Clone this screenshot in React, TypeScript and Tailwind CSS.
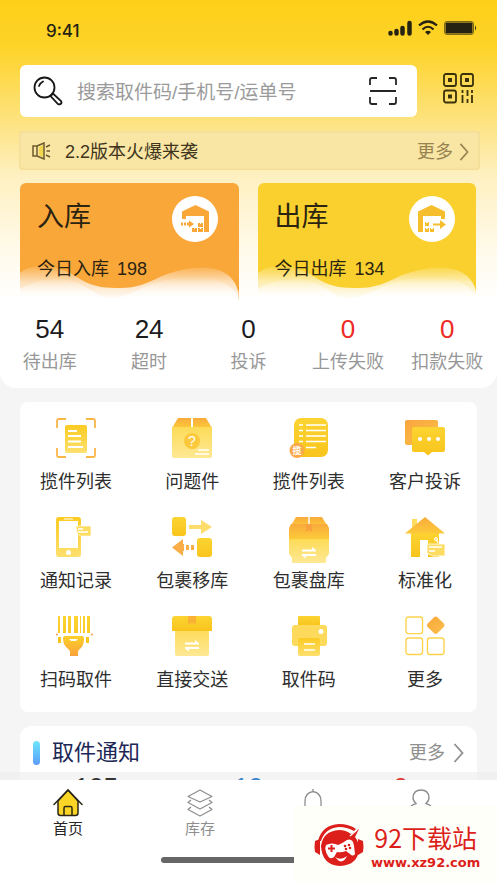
import type { ReactNode } from 'react';

const Chevron = ({ className }: { className: string }) => (
  <svg viewBox="0 0 10 20" className={className} fill="none" stroke="currentColor" strokeWidth="1.8">
    <path d="M1 1l8 9-8 9" />
  </svg>
);

const Gradients = () => (
  <svg width="0" height="0" className="absolute" aria-hidden="true">
    <defs>
      <linearGradient id="gold" x1="0" y1="0" x2="0" y2="1">
        <stop offset="0" stopColor="#fbcb22" />
        <stop offset="1" stopColor="#fde06e" />
      </linearGradient>
      <linearGradient id="pale" x1="0" y1="0" x2="0" y2="1">
        <stop offset="0" stopColor="#fddb58" />
        <stop offset="1" stopColor="#fee894" />
      </linearGradient>
      <linearGradient id="deep" x1="0" y1="0" x2="0" y2="1">
        <stop offset="0" stopColor="#fcd432" />
        <stop offset="1" stopColor="#f8c41c" />
      </linearGradient>
      <linearGradient id="amber" x1="0" y1="0" x2="1" y2="1">
        <stop offset="0" stopColor="#f9a63c" />
        <stop offset="1" stopColor="#fbc04a" />
      </linearGradient>
      <linearGradient id="sunset" x1="0" y1="0" x2="0" y2="1">
        <stop offset="0" stopColor="#fcd028" />
        <stop offset="1" stopColor="#f9a23c" />
      </linearGradient>
      <linearGradient id="roof" x1="0" y1="0" x2="0" y2="1">
        <stop offset="0" stopColor="#f9ab3c" />
        <stop offset="1" stopColor="#fcca38" />
      </linearGradient>
      <linearGradient id="haze" gradientUnits="userSpaceOnUse" x1="0" y1="82" x2="0" y2="117">
        <stop offset="0" stopColor="#fff" stopOpacity="0.05" />
        <stop offset="0.5" stopColor="#fff" stopOpacity="0.65" />
        <stop offset="1" stopColor="#fff" />
      </linearGradient>
      <linearGradient id="mist" gradientUnits="userSpaceOnUse" x1="0" y1="94" x2="0" y2="117">
        <stop offset="0" stopColor="#fff" stopOpacity="0" />
        <stop offset="0.5" stopColor="#fff" stopOpacity="0.5" />
        <stop offset="1" stopColor="#fff" />
      </linearGradient>
    </defs>
  </svg>
);

const ScanListIcon = () => (
  <svg viewBox="0 0 40 40" className="h-10 w-10" fill="none">
    <path d="M1 10V3q0-2 2-2h7M30 1h7q2 0 2 2v7M39 30v7q0 2-2 2h-7M10 39H3q-2 0-2-2v-7" stroke="#fbb649" strokeWidth="1.8" />
    <rect x="9" y="7" width="22" height="28" rx="2" fill="url(#gold)" />
    <path d="M12 13h9M12 18h13M12 23.500h13M12 29h15" stroke="#fff" strokeWidth="1.8" />
  </svg>
);

const QuestionBoxIcon = () => (
  <svg viewBox="0 0 40 40" className="h-10 w-10">
    <path d="M6 0h13v10H0z" fill="url(#roof)" />
    <path d="M21 0h13l6 10H21z" fill="url(#roof)" />
    <path d="M0 9h40v29q0 2-2 2H2q-2 0-2-2z" fill="url(#pale)" />
    <circle cx="20" cy="23" r="8" fill="#fbc93b" />
    <text x="20" y="28" textAnchor="middle" fontSize="14" fill="#fff" fontFamily="Liberation Sans, sans-serif">?</text>
    <path d="M26 32h11M23 36h14" stroke="#fff" strokeWidth="1.300" />
  </svg>
);

const CollectListIcon = () => (
  <svg viewBox="0 0 40 40" className="h-10 w-10">
    <rect x="5" y="0" width="34" height="39" rx="7" fill="url(#deep)" />
    <path d="M10 7h4M10 12.500h4M10 18h4M10 23.500h4M17 7h20M17 12.500h20M17 18h20M17 23.500h20M17 29.500h10" stroke="#fff" strokeWidth="1.600" />
    <circle cx="8" cy="32.500" r="7.500" fill="#f9a94a" />
    <text x="8" y="36" textAnchor="middle" fontSize="9" fontWeight="700" fill="#fff" fontFamily="Noto Sans CJK SC, sans-serif">揽</text>
  </svg>
);

const ChatIcon = () => (
  <svg viewBox="0 0 40 40" className="h-10 w-10">
    <rect x="0" y="2" width="33" height="25" rx="2" fill="url(#amber)" />
    <path d="M9 9h29q2 0 2 2v21q0 2-2 2H27l-4 3.500L19 34H9q-2 0-2-2V11q0-2 2-2z" fill="url(#deep)" />
    <circle cx="15" cy="21" r="2" fill="#fff" />
    <circle cx="24" cy="21" r="2" fill="#fff" />
    <circle cx="33" cy="21" r="2" fill="#fff" />
  </svg>
);

const PhoneIcon = () => (
  <svg viewBox="0 0 40 40" className="h-10 w-10">
    <path d="M3 0h19q3 0 3 3v34q0 3-3 3H3q-3 0-3-3V3q0-3 3-3zm0 4v27h19V4z" fill="url(#gold)" fillRule="evenodd" />
    <path d="M8 2h9" stroke="#fff" strokeWidth="1" />
    <circle cx="12.500" cy="35.500" r="2.500" fill="#fff" />
    <path d="M20 9h14q1 0 1 1v8q0 1-1 1H24l-3-3z" fill="#fddc62" stroke="#fff" strokeWidth="0.600" />
    <path d="M22 12h5M22 15h10" stroke="#fff" strokeWidth="1.300" />
  </svg>
);

const MoveIcon = () => (
  <svg viewBox="0 0 40 40" className="h-10 w-10">
    <rect x="0" y="0" width="14" height="19" rx="3" fill="url(#deep)" />
    <path d="M17 8h12V3l11 7-11 7v-5H17z" fill="#fddc6c" />
    <path d="M0 30.500L11 22v5h1v7h-1v5zM14 28h3v5h-3zM19 28h3v5h-3z" fill="#faae48" />
    <rect x="25" y="21" width="15" height="19" rx="3" fill="url(#deep)" />
  </svg>
);

const StockBoxIcon = () => (
  <svg viewBox="0 0 40 46" className="-mb-1.5 h-[46px] w-10">
    <path d="M7 0h26l6 10H1z" fill="url(#roof)" />
    <path d="M0 22h40v15l-3 4v4q0 1-1 1H4q-1 0-1-1v-4l-3-4z" fill="url(#pale)" />
    <path d="M2 7h36l2 4v11H0V11z" fill="url(#roof)" />
    <path d="M17 7h6v8l-3-2-3 2z" fill="#f8a13d" />
    <path d="M20 0v7" stroke="#fff" strokeWidth="1.400" />
    <path d="M13 34.500h14V33l-4-3v2.500H13zM27 37H13v1.500l4 3V39h10z" fill="#fff" />
  </svg>
);

const HouseIcon = () => (
  <svg viewBox="0 0 40 40" className="h-10 w-10">
    <path d="M7 2h5v10H7z" fill="#fddc62" />
    <path d="M6 15h28v25H23V23h-8v17H6z" fill="url(#deep)" />
    <path d="M20 0l20 16.500H0z" fill="url(#roof)" />
    <path d="M22 27h17q1 0 1 1v10q0 1-1 1H28l-4-2h-2z" fill="#fddc62" stroke="#fff" strokeWidth="0.800" />
    <path d="M24 30h13M24 34h6M33 26l-2-4" stroke="#fff" strokeWidth="1.300" />
    <circle cx="31" cy="22" r="1.500" fill="none" stroke="#fff" />
  </svg>
);

const ScannerIcon = () => (
  <svg viewBox="0 0 40 40" className="h-10 w-10">
    <path d="M2 0h2v17H2zM7 0h3v17H7zM12 0h3v17h-3zM18 0h4v17h-4zM24 0h1v17h-1zM27 0h2v17h-2zM31 0h3v17h-3zM2 21h3v6H2zM30 21h3v6h-3z" fill="url(#deep)" />
    <circle cx="1" cy="18.500" r="1" fill="#f79d4a" />
    <circle cx="36" cy="18.500" r="1" fill="#f79d4a" />
    <path d="M9 20h17q2 0 2 3 0 6-3 9-3 2-3 4v4h-8v-4q0-2-3-4-4-4-4-9 0-3 2-3z" fill="url(#sunset)" />
    <path d="M13 23h9l-2 2h-5z" fill="#fff" />
  </svg>
);

const DeliverBoxIcon = () => (
  <svg viewBox="0 0 40 40" className="h-10 w-10">
    <path d="M3 13h34v25q0 2-2 2H5q-2 0-2-2z" fill="url(#pale)" />
    <path d="M3 0h34q3 0 3 3v12H0V3q0-3 3-3z" fill="url(#deep)" />
    <path d="M16 0h8v8l-4-1-4 1z" fill="#f9b136" />
    <path d="M13 28.500h14V27l-4-3v2.500H13zM27 31H13v1.500l4 3V33h10z" fill="#fff" />
  </svg>
);

const PrinterIcon = () => (
  <svg viewBox="0 0 40 40" className="h-10 w-10">
    <path d="M10 0h20q1 0 1 1v9H9V1q0-1 1-1z" fill="url(#deep)" />
    <rect x="3" y="9" width="35" height="21" rx="3" fill="#fdda5c" />
    <rect x="9" y="22" width="22" height="18" rx="2" fill="url(#gold)" />
    <circle cx="32" cy="15.500" r="2.500" fill="#fff" />
    <path d="M15 28h11M15 34h11" stroke="#fff" strokeWidth="1.400" />
  </svg>
);

const MoreIcon = () => (
  <svg viewBox="0 0 41 41" className="h-10 w-10" fill="none">
    <g stroke="#fdd34c" strokeWidth="1.400">
      <rect x="1" y="1" width="17" height="17" rx="2.500" />
      <rect x="1" y="22.500" width="17" height="17" rx="2.500" />
      <rect x="23" y="22.500" width="17" height="17" rx="2.500" />
    </g>
    <path d="M30 1q1.500-1 3 0l7 7q1 1.500 0 3l-7 7q-1.500 1-3 0l-7-7q-1-1.500 0-3z" fill="url(#amber)" />
  </svg>
);

const actions = [
  { label: '揽件列表', icon: <ScanListIcon /> },
  { label: '问题件', icon: <QuestionBoxIcon /> },
  { label: '揽件列表', icon: <CollectListIcon /> },
  { label: '客户投诉', icon: <ChatIcon /> },
  { label: '通知记录', icon: <PhoneIcon /> },
  { label: '包裹移库', icon: <MoveIcon /> },
  { label: '包裹盘库', icon: <StockBoxIcon /> },
  { label: '标准化', icon: <HouseIcon /> },
  { label: '扫码取件', icon: <ScannerIcon /> },
  { label: '直接交送', icon: <DeliverBoxIcon /> },
  { label: '取件码', icon: <PrinterIcon /> },
  { label: '更多', icon: <MoreIcon /> },
];

const stats = [
  { value: 54, label: '待出库', color: 'text-[#1c1c1e]' },
  { value: 24, label: '超时', color: 'text-[#1c1c1e]' },
  { value: 0, label: '投诉', color: 'text-[#1c1c1e]' },
  { value: 0, label: '上传失败', color: 'text-[#ee2a24]' },
  { value: 0, label: '扣款失败', color: 'text-[#ee2a24]' },
];

const StatusBar = () => (
  <div className="flex h-[65px] items-start justify-between pt-5 pr-5 pl-[46px] text-[#262312]">
    <span className="font-['Inter',sans-serif] text-[17px] leading-[22px] font-medium">9:41</span>
    <div className="flex items-center gap-1.5">
      <svg viewBox="0 0 24 16" className="h-4 w-6" stroke="currentColor" strokeWidth="4.500" strokeLinecap="round">
        <path d="M2.500 13v0.500M8.500 11v2.500M14.500 8v5.500M21.500 3v10.500" />
      </svg>
      <svg viewBox="0 0 20 16" className="h-4 w-5" fill="none" stroke="currentColor" strokeWidth="2.200">
        <path d="M1 5.500Q10-2.500 19 5.500M4.500 9.500Q10 4 15.500 9.500" />
        <path d="M7 12q3-2.500 6 0l-3 3z" fill="currentColor" stroke="none" />
      </svg>
      <svg viewBox="0 0 33 14" className="h-3.5 w-[33px]">
        <rect x="0.500" y="0.500" width="29" height="13" rx="2.500" fill="none" stroke="currentColor" strokeOpacity="0.600" />
        <rect x="1.500" y="1.500" width="27" height="11" rx="1" fill="currentColor" />
        <path d="M31 4.500q2 2.500 0 5z" fill="currentColor" />
      </svg>
    </div>
  </div>
);

const SearchRow = () => (
  <div className="flex items-center gap-[26px] pr-[23px] pl-5">
    <form className="flex h-[52px] min-w-0 flex-1 items-center rounded-md bg-white pr-5 pl-[13px]">
      <svg viewBox="0 0 30 30" className="h-[30px] w-[30px] shrink-0" fill="none" stroke="#17171a" strokeWidth="1.800">
        <circle cx="11.500" cy="11.500" r="10" />
        <path d="M6 10q1-3 4-4.500M18.500 19l1.500-1.500 8 7.500q1 1.500 0 2.500-1.500 1.500-3 .5l-7.500-8z" strokeLinecap="round" />
      </svg>
      <label htmlFor="search" className="sr-only">搜索</label>
      <input
        id="search"
        type="text"
        placeholder="搜索取件码/手机号/运单号"
        className="ml-3.5 h-9 min-w-0 flex-1 bg-transparent pt-1 text-[19px] text-[#333] outline-none placeholder:text-[#9a9a9a]"
      />
      <button type="button" aria-label="扫一扫">
        <svg viewBox="0 0 28 28" className="h-7 w-7" fill="none" stroke="#262626" strokeWidth="1.800">
          <path d="M1 8V3q0-2 2-2h5M20 1h5q2 0 2 2v5M27 20v5q0 2-2 2h-5M8 27H3q-2 0-2-2v-5M1 14h26" />
        </svg>
      </button>
    </form>
    <button type="button" aria-label="二维码" className="-mt-1.5">
      <svg viewBox="0 0 31 31" className="h-[31px] w-[31px]" fill="none" stroke="#3a300c" strokeWidth="1.800">
        <rect x="1" y="1" width="12" height="12" rx="2" />
        <rect x="18" y="1" width="12" height="12" rx="2" />
        <rect x="1" y="17.500" width="12" height="12" rx="2" />
        <path d="M5 5h4v4H5zM22 5h4v4h-4zM5 21.500h4v4H5z" fill="#3a300c" stroke="none" />
        <path d="M19.500 17v3M19.500 22v8M24.500 17v6M24.500 26v4M29 17v3M29 22v8" />
      </svg>
    </button>
  </div>
);

const Notice = () => (
  <div className="mt-3.5 mr-[17px] ml-[19px] flex h-[39px] items-center rounded-sm bg-[#fae6a4] pr-[11px] pl-[13px] shadow-[inset_0_0_3px_#e6cf85]">
    <svg viewBox="0 0 20 18" className="h-[18px] w-5" fill="none" stroke="#6b5a2c" strokeWidth="1.500">
      <path d="M1 4h4v10H1zM5 4l7-3v16l-7-3z" />
      <path d="M7 5l4-2v12l-4-2z" fill="#f2d64a" stroke="none" />
      <path d="M14 5l4-2M14.500 9H18M14 13l4 2" />
    </svg>
    <span className="ml-[13px] flex-1 pt-0.5 text-lg text-[#40351c]">2.2版本火爆来袭</span>
    <a href="#notices" className="flex items-center gap-1.5 pt-0.5 text-lg text-[#978352]">
      更多
      <Chevron className="h-[18px] w-2.5" />
    </a>
  </div>
);

type WarehouseCardProps = { title: string; today: string; count: number; color: string; icon: ReactNode };

const WarehouseCard = ({ title, today, count, color, icon }: WarehouseCardProps) => (
  <button type="button" className={`relative h-[117px] overflow-hidden rounded-t-md text-left text-[#2b2410] ${color}`}>
    <svg viewBox="0 0 219 117" preserveAspectRatio="none" className="absolute inset-0 h-full w-full">
      <path d="M0 90C12 78 42 82 60 96 75 105 88 105 100 105 118 105 128 100 140 94 168 82 212 76 219 110V117H0z" fill="url(#haze)" />
      <path d="M0 106C25 92 50 94 66 104S82 115 92 115 112 110 124 104C160 90 205 88 219 114V117H0z" fill="url(#mist)" />
    </svg>
    <div className="relative flex h-full flex-col justify-between pt-[13px] pr-[21px] pb-[19px] pl-[17px]">
      <div className="flex items-start justify-between">
        <span className="text-[27px] leading-[42px]">{title}</span>
        <span className="flex h-[46px] w-[46px] items-center justify-center rounded-full bg-white">{icon}</span>
      </div>
      <span className="flex gap-2 text-lg leading-6">
        <span>{today}</span>
        <span>{count}</span>
      </span>
    </div>
  </button>
);

const InIcon = () => (
  <svg viewBox="0 0 28 28" className="h-7 w-7" fill="#faa73a">
    <path d="M1 6.500L14.500 0 28 6.500V27h-5V11H5v3H1z" />
    <path d="M0 17.500h2v3H0zM3 17.500h2v3H3zM6 17.500h2v-2l5 3.500-5 3.500v-2H6zM17 18h2v1h1v-1h2v4h-5zM11 23h2v1h1v-1h2v4h-5zM17 23h2v1h1v-1h2v4h-5z" />
  </svg>
);

const OutIcon = () => (
  <svg viewBox="0 0 28 28" className="h-7 w-7" fill="#f6bd2c">
    <path d="M0 6.500L13.500 0 27 6.500V14h-4v-3H5v16H0z" />
    <path d="M15 18.500h7v-3.500l6 4.500-6 4.500v-3.500h-7zM7 17h1v1h2v-1h1v4H7zM7 23h1v1h2v-1h1v4H7zM12 23h1v1h2v-1h1v4h-4z" />
  </svg>
);

const Header = () => (
  <header className="rounded-b-2xl bg-white bg-[linear-gradient(180deg,#fdcf17_0px,#fed42c_50px,#fde27c_118px,#fef0c0_175px,#fffaea_250px,#ffffff_300px)]">
    <StatusBar />
    <SearchRow />
    <Notice />
    <div className="mt-[13px] grid grid-cols-2 gap-[19px] pr-[21px] pl-5">
      <WarehouseCard title="入库" today="今日入库" count={198} color="bg-[#faa73a]" icon={<InIcon />} />
      <WarehouseCard title="出库" today="今日出库" count={134} color="bg-[#fad02e]" icon={<OutIcon />} />
    </div>
    <dl className="mt-3.5 grid grid-cols-5 pb-2 text-center">
      {stats.map((s) => (
        <div key={s.label} className="flex flex-col-reverse">
          <dt className="text-lg leading-9 whitespace-nowrap text-[#979797]">{s.label}</dt>
          <dd className={`text-[26px] leading-[30px] ${s.color}`}>{s.value}</dd>
        </div>
      ))}
    </dl>
  </header>
);

const ActionGrid = () => (
  <section className="mt-3.5 mr-5 ml-5 grid grid-cols-[repeat(4,max-content)] justify-between gap-y-[23px] rounded-lg bg-white pt-4 pr-4 pb-5 pl-5">
    {actions.map((a, i) => (
      <button key={i} type="button" className="flex flex-col items-center gap-3 text-lg leading-6 text-[#2e2e2e]">
        {a.icon}
        {a.label}
      </button>
    ))}
  </section>
);

const PickupNotice = () => (
  <section className="mx-5 mt-3.5 rounded-t-xl bg-white">
    <div className="flex items-center pt-3 pr-[13px] pl-[13px]">
      <span className="h-6 w-[7px] rounded-full bg-linear-to-b from-[#6fe6fb] to-[#5a9cf8]" />
      <h2 className="ml-3 flex-1 text-[22px] leading-[30px] text-[#1e2857]">取件通知</h2>
      <a href="#pickup" className="flex items-center gap-2 text-lg leading-[30px] text-[#8f8f8f]">
        更多
        <Chevron className="h-5 w-[11px]" />
      </a>
    </div>
    <div className="relative z-10 mt-1 grid grid-cols-3 text-center text-[26px] leading-[30px]">
      <span className="text-[#333]">105</span>
      <span className="text-[#3d86cf]">10</span>
      <span className="text-[#e03a2e]">0</span>
    </div>
  </section>
);

const TabBar = () => (
  <nav className="relative h-[103px] shrink-0 bg-white">
    <div className="absolute inset-x-0 -top-2 h-2 bg-[#ececec]/60" />
    <div className="grid grid-cols-[132fr_132fr_94fr_122fr] pt-[9px] pr-[15px] pl-0.5 text-[#8e8e8e]">
      <a href="#home" className="flex flex-col items-center text-[#262626]">
        <svg viewBox="0 0 30 28" className="h-7 w-[30px]" fill="none" stroke="#2b2718" strokeWidth="1.500" strokeLinejoin="round" strokeLinecap="round">
          <path d="M5 12L15 1l10 11v12q0 2.500-2.500 2.500h-15Q5 26.500 5 24z" fill="#fbd526" />
          <path d="M1 15.500L15 1l14 14.500M11 26v-7q0-1.500 1.500-1.500h5q1.500 0 1.500 1.500v7" />
        </svg>
        <span className="text-[15px] leading-6">首页</span>
      </a>
      <a href="#stock" className="flex flex-col items-center">
        <svg viewBox="0 0 26 28" className="h-7 w-[26px]" fill="none" stroke="currentColor" strokeWidth="1.200" strokeLinejoin="round">
          <path d="M13 1l12 6.500L13 13 1 7.500z" />
          <path d="M4 11l-3 2.500L13 20l12-6.500-3-2.500M4 18l-3 2.500L13 27l12-6.500-3-2.500" />
        </svg>
        <span className="text-[15px] leading-6">库存</span>
      </a>
      <a href="#messages" aria-label="消息" className="flex flex-col items-center">
        <svg viewBox="0 0 20 28" className="h-7 w-5" fill="none" stroke="currentColor" strokeWidth="1.300">
          <path d="M2 22V12Q2 4 10 2.500 18 4 18 12v10M10 0v3M0 22h20" />
        </svg>
      </a>
      <a href="#me" aria-label="我的" className="flex flex-col items-center">
        <svg viewBox="0 0 22 28" className="h-7 w-[22px]" fill="none" stroke="currentColor" strokeWidth="1.400">
          <path d="M1 17q2-1.500 5-2.500Q3 12 3 8.500 3.500 1 11 1t8 7.500q0 3.500-3 6 3 1 5 2.500" />
        </svg>
      </a>
    </div>
    <div className="absolute bottom-5 left-1/2 h-1.5 w-44 -translate-x-1/2 rounded-full bg-[#666]" />
    <SiteBadge />
  </nav>
);

const SiteBadge = () => (
  <div className="absolute right-0 bottom-0 flex h-[77px] w-[203px] items-center gap-[7px] bg-[#fffffa] pt-px pl-5 text-[#dd1f1b]">
    <svg viewBox="0 0 50 43" className="h-[43px] w-[50px] shrink-0">
      <path d="M4 17Q8 1 25 0q10 0 17 5l-2 2Q33 3 25 3 11 4 7 17z" fill="#dd1f1b" />
      <path d="M1 17l5-2v16l-5-3q-1-5 0-11zM44 15l5 2q1 6 0 11l-5 3z" fill="#dd1f1b" />
      <path d="M7 22Q9 7 25 6q7 0 12 4l8-5-4 8q4 5 4 12Q44 41 26 42 8 41 7 22z" fill="#dd1f1b" />
      <path d="M12 21q6-3 12 0 5-2 9-5 6-2 7 6l1 8q-2 3-5 0l-4-3q-5 2-9 1l-3 5q-4 3-6-1-4-6-2-11z" fill="#fff" />
      <path d="M14 24.500h7M17.500 21v7" stroke="#dd1f1b" strokeWidth="2" />
      <circle cx="31" cy="22" r="1.300" fill="#dd1f1b" />
      <circle cx="35" cy="21" r="1.300" fill="#dd1f1b" />
      <circle cx="32" cy="25" r="1.300" fill="#dd1f1b" />
      <circle cx="36" cy="24" r="1.300" fill="#dd1f1b" />
      <path d="M21 33q6 4 12-1-3 7-8 5z" fill="#fff" />
      <path d="M36 12l7-6" stroke="#fff" strokeWidth="1.300" />
    </svg>
    <div className="flex flex-col items-center whitespace-nowrap">
      <span className="font-['Noto_Sans_CJK_SC',sans-serif] text-[25px] leading-9">92下载站</span>
      <span className="font-['DejaVu_Sans',sans-serif] text-[13px] leading-4 font-bold">www.xz92.com</span>
    </div>
  </div>
);

export default function App() {
  return (
    <div className="flex h-screen flex-col overflow-hidden bg-[#f5f5f5] font-['Liberation_Sans','Noto_Sans_CJK_SC',sans-serif]">
      <Gradients />
      <main className="min-h-0 flex-1 overflow-hidden">
        <Header />
        <ActionGrid />
        <PickupNotice />
      </main>
      <TabBar />
    </div>
  );
}
